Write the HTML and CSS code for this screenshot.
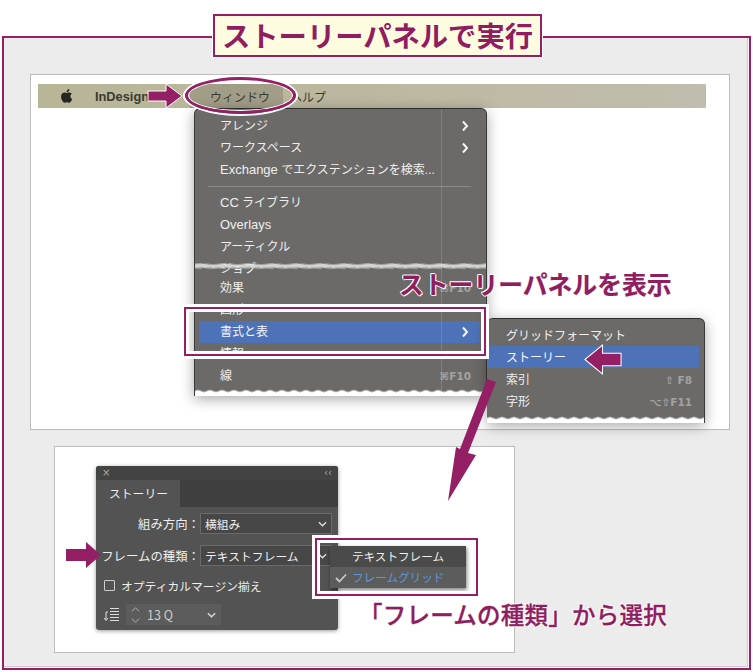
FILE: index.html
```html
<!DOCTYPE html>
<html lang="ja">
  <head>
    <meta charset="UTF-8" />
    <meta name="viewport" content="width=device-width, initial-scale=1.0" />
    <link rel="stylesheet" href="styles.css">
    <title>ストーリーパネルで実行</title>
  </head>
  <body>
    <!-- wave patterns shared by the torn menu edges -->
    <svg class="defs" width="0" height="0">
      <defs>
        <pattern id="wave-edge" patternUnits="userSpaceOnUse" width="12" height="8">
          <path d="M0 3 Q3 1 6 3 T12 3 V8 H0 Z" fill="#fff"/>
          <path d="M0 3 Q3 1 6 3 T12 3" fill="none" stroke="#b5b5b5"/>
        </pattern>
        <pattern id="wave-band" patternUnits="userSpaceOnUse" width="24" height="8">
          <path d="M0 2 Q6 1 12 2 T24 2 V6 Q18 7 12 6 T0 6 Z" fill="#e4e4e2" opacity="0.85"/>
          <path d="M0 2 Q6 1 12 2 T24 2 M0 6 Q6 7 12 6 T24 6" fill="none" stroke="#a5a5a3" stroke-dasharray="7 3"/>
        </pattern>
      </defs>
    </svg>

    <div class="frame">
      <h1 class="title">ストーリーパネルで実行</h1>

      <section class="shot shot-top">
        <div class="menubar">
          <svg class="apple" viewBox="0 0 24 24"><path d="M17.05 12.54c-.03-2.6 2.12-3.85 2.22-3.91-1.21-1.77-3.09-2.01-3.76-2.04-1.6-.16-3.12.94-3.93.94-.81 0-2.06-.92-3.39-.89-1.74.03-3.35 1.01-4.25 2.57-1.81 3.14-.46 7.79 1.3 10.34.86 1.25 1.89 2.65 3.24 2.6 1.3-.05 1.79-.84 3.36-.84 1.57 0 2.01.84 3.39.81 1.4-.02 2.28-1.27 3.14-2.53.99-1.45 1.4-2.86 1.42-2.93-.03-.01-2.72-1.04-2.74-4.12zM14.47 4.9c.72-.87 1.2-2.08 1.07-3.28-1.03.04-2.28.69-3.02 1.55-.66.77-1.24 2-1.09 3.18 1.15.09 2.32-.58 3.04-1.45z"/></svg>
          <span class="app-name">InDesign</span>
          <span class="bar-item active">ウィンドウ</span>
          <span class="bar-item">ヘルプ</span>
        </div>

        <div class="menu main-menu">
          <div class="menu-item">アレンジ<svg class="chevron" viewBox="0 0 8 12"><path d="M2 1.5 6 6 2 10.5"/></svg></div>
          <div class="menu-item">ワークスペース<svg class="chevron" viewBox="0 0 8 12"><path d="M2 1.5 6 6 2 10.5"/></svg></div>
          <div class="menu-item"><span><span class="latin">Exchange</span> でエクステンションを検索...</span></div>
          <div class="menu-sep"></div>
          <div class="menu-item"><span><span class="latin">CC</span> ライブラリ</span></div>
          <div class="menu-item"><span class="latin">Overlays</span></div>
          <div class="menu-item">アーティクル</div>
          <div class="menu-item">ジョブ</div>
          <div class="menu-item after-tear">効果<span class="keys">⌘F10</span></div>
          <div class="menu-item">図形</div>
          <div class="menu-item selected">書式と表<svg class="chevron" viewBox="0 0 8 12"><path d="M2 1.5 6 6 2 10.5"/></svg></div>
          <div class="menu-item">情報</div>
          <div class="menu-item">線<span class="keys">⌘F10</span></div>
          <div class="menu-item">自動</div>
          <div class="column-line"></div>
          <svg class="tear"><rect width="100%" height="8" fill="url(#wave-band)"/></svg>
          <svg class="edge"><rect width="100%" height="8" fill="url(#wave-edge)"/></svg>
        </div>

        <div class="menu sub-menu">
          <div class="menu-item">グリッドフォーマット</div>
          <div class="menu-item selected">ストーリー</div>
          <div class="menu-item">索引<span class="keys">⇧ F8</span></div>
          <div class="menu-item">字形<span class="keys">⌥⇧F11</span></div>
          <svg class="edge"><rect width="100%" height="8" fill="url(#wave-edge)"/></svg>
        </div>

        <div class="ring"></div>
        <div class="callout-box row-box"></div>
        <p class="caption show-caption">ストーリーパネルを表示</p>

        <svg class="arrow arrow-bar" viewBox="0 0 36 26"><path d="M1 8H19V1L35 13 19 25V18H1Z"/></svg>
        <svg class="arrow arrow-sub" viewBox="0 0 38 30"><path d="M36 9H18V1L1 15 18 29V21H36Z"/></svg>
      </section>

      <section class="shot shot-bottom">
        <div class="story-panel">
          <div class="panel-top"><span>×</span><span>‹‹</span></div>
          <div class="tabs"><span class="tab">ストーリー</span></div>
          <div class="panel-body">
            <div class="field">
              <label class="field-label">組み方向：</label>
              <div class="select">横組み<svg class="caret" viewBox="0 0 10 6"><path d="M1 1 5 5 9 1"/></svg></div>
            </div>
            <div class="field">
              <label class="field-label">フレームの種類：</label>
              <div class="select">テキストフレーム<svg class="caret" viewBox="0 0 10 6"><path d="M1 1 5 5 9 1"/></svg></div>
            </div>
            <div class="check-row"><span class="checkbox"></span>オプティカルマージン揃え</div>
            <div class="leading-row">
              <svg class="leading-icon" viewBox="0 0 17 15"><path d="M7 1.5H16M7 4.5H16M7 7.5H16M7 10.5H16M7 13.5H16M1 11 3 13.5 5 11M3 13V5H5" /></svg>
              <div class="spinner">
                <svg class="updown" viewBox="0 0 10 20"><path d="M1 6 5 2 9 6M1 14 5 18 9 14"/></svg>
                <span class="spin-value">13 Q</span>
                <svg class="caret" viewBox="0 0 10 6"><path d="M1 1 5 5 9 1"/></svg>
              </div>
            </div>
          </div>
        </div>

        <div class="dropdown">
          <div class="drop-item">テキストフレーム</div>
          <div class="drop-item current"><svg class="tick" viewBox="0 0 12 10"><path d="M1 5 4.5 8.5 11 1.5"/></svg>フレームグリッド</div>
        </div>
        <div class="callout-box drop-box"></div>
        <p class="caption pick-caption">「フレームの種類」から選択</p>

        <svg class="arrow arrow-field" viewBox="0 0 36 26"><path d="M0 7H20V0L35 13 20 26V19H0Z"/></svg>
      </section>

      <svg class="arrow arrow-long" viewBox="0 0 60 125"><path d="M43 1 52 4 24 75 32 77 4 123 12 69 16 71Z"/></svg>
    </div>
  </body>
</html>
```

FILE: styles.css
```css
* {
    box-sizing: border-box;
}
body {
    margin: 0;
    height: 672px;
    overflow: hidden;
    background-color: #fff;
    font-family: "Liberation Sans", "Noto Sans CJK JP", "DejaVu Sans", sans-serif;
}
.defs {
    position: absolute;
}

/* outer frame */
.frame {
    position: relative;
    height: 634px;
    margin: 36px 2px 0;
    padding: 36px 19px 0 26px;
    border: 2px solid #951f65;
    background-color: #ececec;
    box-shadow: inset -1px -1px 0 #fff, inset -2px -2px 0 #dcc4d2;
}
.title {
    position: absolute;
    left: 209px;
    top: -24px;
    width: 329px;
    height: 43px;
    margin: 0;
    border: 2px solid #951f65;
    outline: 1px solid #fff;
    background-color: #fdfbe0;
    color: #8f1d5f;
    font: 700 28.3px/38px "Noto Sans CJK JP", sans-serif;
    text-align: center;
    white-space: nowrap;
}

/* white screenshot areas */
.shot {
    position: relative;
    border: 1px solid #bcbcbc;
    background-color: #fff;
}
.shot-top {
    height: 356px;
    padding: 9px 23px 0 7px;
}
.shot-bottom {
    width: 461px;
    height: 207px;
    margin: 16px 0 0 24px;
}

/* mac menu bar */
.menubar {
    display: flex;
    align-items: center;
    height: 24px;
    padding-left: 21px;
    background: linear-gradient(90deg, #b9b597, #bcb8a0 50%, #c1bdae);
    color: #3a3a32;
    font-size: 12px;
}
.apple {
    flex: none;
    width: 16px;
    height: 16px;
    fill: #26261f;
}
.app-name {
    flex: none;
    width: 81px;
    margin-left: 20px;
    font-size: 12.8px;
    font-weight: 700;
}
.bar-item {
    display: flex;
    align-items: center;
    flex: none;
    height: 24px;
}
.bar-item.active {
    width: 93px;
    margin-left: 14px;
    padding-left: 20px;
    background-color: #a19d87;
}
.bar-item:last-child {
    margin-left: 7px;
}

/* dropdown menus */
.menu {
    position: absolute;
    overflow: hidden;
    border-top: 1px solid #2d2d2b;
    border-radius: 6px 6px 0 0;
    background-color: #6b6a68;
    color: #efefed;
    font-size: 12px;
    line-height: 22px;
    box-shadow: 0 3px 14px rgba(0, 0, 0, 0.35);
}
.main-menu {
    left: 163px;
    top: 33px;
    width: 293px;
    height: 288px;
    padding-top: 6px;
    border-left: 1px solid #3a3a38;
    border-right: 1px solid #3a3a38;
}
.sub-menu {
    left: 456px;
    top: 243px;
    width: 218px;
    height: 105px;
    padding-top: 5px;
    border-right: 1px solid #3a3a38;
}
.menu-item {
    display: flex;
    align-items: center;
    justify-content: space-between;
    height: 22px;
    margin: 0 6px 0 4px;
    padding: 0 11px 0 21px;
    white-space: nowrap;
}
.sub-menu .menu-item {
    margin: 0 5px 0 0;
    padding: 2px 9px 0 19px;
}
.menu-item.selected {
    background-color: #4e72b8;
    color: #f4f6fa;
}
.latin {
    font-size: 13px;
}
.after-tear {
    margin-top: -3px;
}
.menu-sep {
    height: 1px;
    margin: 5px 15px 5px 13px;
    background-color: #8b8a88;
}
.column-line {
    position: absolute;
    left: 246px;
    top: 0;
    width: 1px;
    height: 100%;
    background-color: rgba(255, 255, 255, 0.14);
}
.chevron {
    width: 8px;
    height: 12px;
    fill: none;
    stroke: #f5f5f5;
    stroke-width: 2;
}
.keys {
    margin-right: -2px;
    color: #a3a2a0;
    font-size: 10.5px;
    font-family: "DejaVu Sans", sans-serif;
    font-weight: 700;
}
.tear,
.edge {
    position: absolute;
    left: 0;
    width: 100%;
    height: 8px;
}
.tear {
    top: 153px;
}
.edge {
    bottom: 0;
}

/* annotations */
.ring {
    position: absolute;
    left: 154px;
    top: 2px;
    width: 111px;
    height: 37px;
    border: 3px solid #951f65;
    border-radius: 50%;
    box-shadow: 0 0 0 2px #fff, inset 0 0 0 1px #fff;
}
.callout-box {
    position: absolute;
    border: 2px solid #951f65;
    box-shadow: 0 0 0 3px #fff, inset 0 0 0 3px #fff;
}
.row-box {
    left: 153px;
    top: 232px;
    width: 302px;
    height: 49px;
}
.drop-box {
    left: 260px;
    top: 91px;
    width: 163px;
    height: 58px;
}
.caption {
    position: absolute;
    margin: 0;
    color: #8f1d5f;
    font: 700 24.8px/30px "Noto Sans CJK JP", sans-serif;
    white-space: nowrap;
    -webkit-text-stroke: 0.2px #8f1d5f;
    text-shadow: 1px 0 #fff, -1px 0 #fff, 0 1px #fff, 0 -1px #fff, 1px 1px #fff, -1px -1px #fff;
}
.show-caption {
    left: 368px;
    top: 193px;
}
.pick-caption {
    left: 304px;
    top: 152px;
    font-size: 23.5px;
    font-weight: 500;
    letter-spacing: 0.25px;
    -webkit-text-stroke: 0.3px #8f1d5f;
}
.arrow {
    position: absolute;
    fill: #951f65;
    stroke: #fff;
    stroke-width: 1;
}
.arrow-bar {
    left: 116px;
    top: 8px;
    width: 36px;
    height: 26px;
}
.arrow-sub {
    left: 552px;
    top: 269px;
    width: 41px;
    height: 31px;
}
.arrow-field {
    left: 11px;
    top: 95px;
    width: 36px;
    height: 26px;
    stroke: none;
}
.arrow-long {
    left: 440px;
    top: 340px;
    width: 60px;
    height: 125px;
    stroke: none;
}

/* story panel */
.story-panel {
    position: absolute;
    left: 41px;
    top: 19px;
    width: 242px;
    height: 164px;
    overflow: hidden;
    border-radius: 3px;
    background-color: #535353;
    color: #eee;
    font: 11.8px "Noto Sans CJK JP", sans-serif;
    box-shadow: 0 1px 4px rgba(0, 0, 0, 0.4);
}
.panel-top {
    display: flex;
    justify-content: space-between;
    height: 14px;
    padding: 0 6px;
    background-color: #434343;
    color: #aaa;
    font: 10px/14px "DejaVu Sans", sans-serif;
}
.tabs {
    height: 27px;
    background-color: #3f3f3f;
}
.tab {
    display: block;
    width: 84px;
    height: 27px;
    padding-left: 13px;
    background-color: #535353;
    line-height: 26px;
}
.panel-body {
    display: flex;
    flex-direction: column;
    padding-top: 6px;
}
.field {
    display: flex;
    align-items: center;
    height: 21px;
    margin-bottom: 11px;
}
.field-label {
    width: 104px;
    font-size: 12.4px;
    text-align: right;
    white-space: nowrap;
}
.select {
    display: flex;
    align-items: center;
    justify-content: space-between;
    width: 132px;
    height: 21px;
    padding: 0 4px;
    border: 1px solid #6a6a6a;
    background-color: #474747;
}
.caret {
    width: 9px;
    height: 6px;
    fill: none;
    stroke: #ddd;
    stroke-width: 1.5;
}
.check-row {
    display: flex;
    align-items: center;
    height: 16px;
    padding-left: 8px;
    white-space: nowrap;
}
.checkbox {
    width: 11px;
    height: 11px;
    margin-right: 6px;
    border: 1px solid #ccc;
    border-radius: 1px;
}
.leading-row {
    display: flex;
    align-items: center;
    margin-top: 11px;
    padding-left: 7px;
}
.leading-icon {
    width: 17px;
    height: 15px;
    fill: none;
    stroke: #ddd;
}
.spinner {
    display: flex;
    align-items: center;
    width: 95px;
    height: 21px;
    margin-left: 6px;
    padding: 0 5px;
    background-color: #5c5c5c;
    color: #ccc;
}
.updown {
    width: 9px;
    height: 18px;
    fill: none;
    stroke: #bbb;
}
.spin-value {
    flex: 1;
    margin-left: 7px;
    font-size: 12.5px;
}

/* frame type dropdown */
.dropdown {
    position: absolute;
    left: 275px;
    top: 99px;
    width: 136px;
    height: 42px;
    background-color: #4a4a4a;
    color: #f0f0f0;
    font: 11.6px "Noto Sans CJK JP", sans-serif;
    box-shadow: 1px 2px 4px rgba(0, 0, 0, 0.5);
}
.drop-item {
    position: relative;
    height: 21px;
    padding-left: 22px;
    line-height: 21px;
    white-space: nowrap;
}
.drop-item.current {
    background-color: #5c5c5c;
    color: #5f97d6;
}
.tick {
    position: absolute;
    left: 5px;
    top: 6px;
    width: 12px;
    height: 10px;
    fill: none;
    stroke: #c8c8c8;
    stroke-width: 1.8;
}
```
